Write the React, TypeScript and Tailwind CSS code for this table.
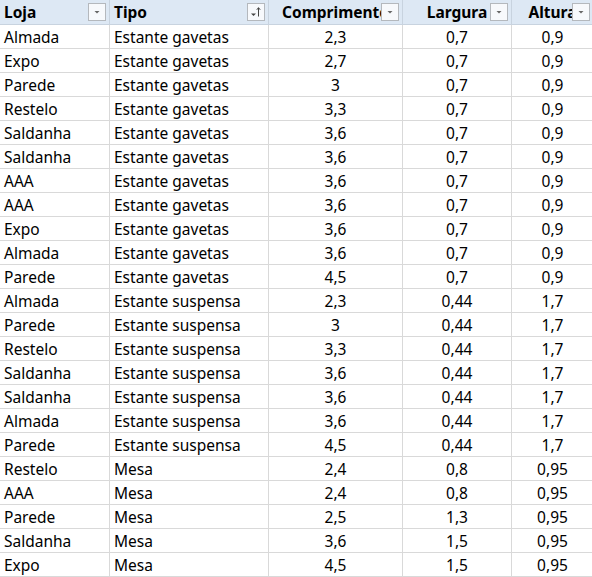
import React from 'react'

type Row = [string, string, string, string, string]

const rows: Row[] = [
  ['Almada', 'Estante gavetas', '2,3', '0,7', '0,9'],
  ['Expo', 'Estante gavetas', '2,7', '0,7', '0,9'],
  ['Parede', 'Estante gavetas', '3', '0,7', '0,9'],
  ['Restelo', 'Estante gavetas', '3,3', '0,7', '0,9'],
  ['Saldanha', 'Estante gavetas', '3,6', '0,7', '0,9'],
  ['Saldanha', 'Estante gavetas', '3,6', '0,7', '0,9'],
  ['AAA', 'Estante gavetas', '3,6', '0,7', '0,9'],
  ['AAA', 'Estante gavetas', '3,6', '0,7', '0,9'],
  ['Expo', 'Estante gavetas', '3,6', '0,7', '0,9'],
  ['Almada', 'Estante gavetas', '3,6', '0,7', '0,9'],
  ['Parede', 'Estante gavetas', '4,5', '0,7', '0,9'],
  ['Almada', 'Estante suspensa', '2,3', '0,44', '1,7'],
  ['Parede', 'Estante suspensa', '3', '0,44', '1,7'],
  ['Restelo', 'Estante suspensa', '3,3', '0,44', '1,7'],
  ['Saldanha', 'Estante suspensa', '3,6', '0,44', '1,7'],
  ['Saldanha', 'Estante suspensa', '3,6', '0,44', '1,7'],
  ['Almada', 'Estante suspensa', '3,6', '0,44', '1,7'],
  ['Parede', 'Estante suspensa', '4,5', '0,44', '1,7'],
  ['Restelo', 'Mesa', '2,4', '0,8', '0,95'],
  ['AAA', 'Mesa', '2,4', '0,8', '0,95'],
  ['Parede', 'Mesa', '2,5', '1,3', '0,95'],
  ['Saldanha', 'Mesa', '3,6', '1,5', '0,95'],
  ['Expo', 'Mesa', '4,5', '1,5', '0,95'],
]

const FilterButton = ({ sorted = false }: { sorted?: boolean }) => (
  <div className="absolute right-[3px] top-[3px] w-[18px] h-[18px] bg-[#f7f9fc] border border-[#b4b8bd] flex items-center justify-center">
    {sorted ? (
      <svg width="14" height="14" viewBox="0 0 14 14">
        <path d="M2 8.5 L7 8.5 L4.5 11 Z" fill="#444" />
        <path d="M9.5 11.5 L9.5 3" stroke="#444" strokeWidth="1" />
        <path d="M7.8 4.8 L9.5 2.6 L11.2 4.8" stroke="#444" strokeWidth="1" fill="none" />
      </svg>
    ) : (
      <svg width="10" height="10" viewBox="0 0 10 10">
        <path d="M2.5 4 L7.5 4 L5 6.5 Z" fill="#666" />
      </svg>
    )}
  </div>
)

const headers = [
  { label: 'Loja', align: 'left', sorted: false },
  { label: 'Tipo', align: 'left', sorted: true },
  { label: 'Comprimento', align: 'center', sorted: false },
  { label: 'Largura', align: 'center', sorted: false },
  { label: 'Altura', align: 'center', sorted: false },
]

export default function App() {
  return (
    <div className="w-[592px] h-[577px] overflow-hidden bg-white text-[15.5px] text-black font-['Noto_Sans',sans-serif]">
      <div className="grid grid-cols-[110px_159px_134px_109px_82px]">
        {headers.map((h, i) => (
          <div
            key={i}
            className={`relative h-[25px] bg-[#dde8f4] border-r border-b border-[#c8d3df] overflow-hidden font-bold leading-[25px] whitespace-nowrap ${
              h.align === 'left' ? 'pl-[4px] text-left' : 'text-center'
            }`}
          >
            {h.label}
            <FilterButton sorted={h.sorted} />
          </div>
        ))}
        {rows.map((r, ri) =>
          r.map((c, ci) => (
            <div
              key={`${ri}-${ci}`}
              className={`h-[24px] border-r border-b border-[#d9d9d9] leading-[24px] whitespace-nowrap overflow-hidden ${
                ci < 2 ? 'pl-[4px]' : 'text-center'
              }`}
            >
              {c}
            </div>
          ))
        )}
      </div>
    </div>
  )
}
